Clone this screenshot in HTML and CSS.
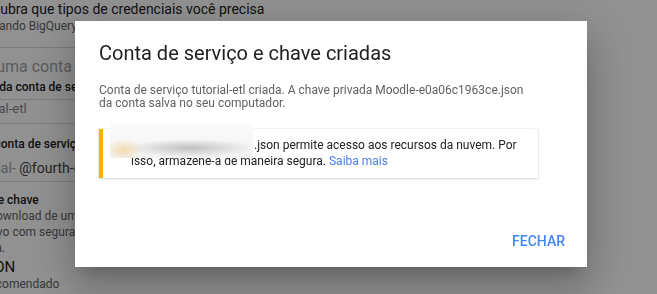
FILE: index.html
```html
<!DOCTYPE html>
<html lang="pt-BR">
<head>
    <meta charset="UTF-8">
    <meta name="viewport" content="width=device-width, initial-scale=1.0">
    <title>Criar chave da conta de serviço</title>
    <link rel="stylesheet" href="styles.css">
</head>
<body>
    <div class="page">
        <div class="intro">
            <h2 class="intro-title">Descubra que tipos de credenciais você precisa</h2>
            <p class="intro-sub">Usando BigQuery</p>
        </div>
        <p class="step-title">Crie uma conta de serviço</p>
        <p class="label lined">Nome da conta de serviço</p>
        <p class="value lined-2">tutorial-etl</p>
        <p class="label label-id">ID da conta de serviço</p>
        <p class="value-id lined-3"><span class="muted">tutorial-</span> @fourth-epoch-218014.iam.gserviceaccount.com</p>
        <p class="label label-key">Tipo de chave</p>
        <p class="desc">
            <span class="ln ln-1">Fazer download de um arquivo que contém a chave privada. Armazene o</span>
            <span class="ln ln-2">arquivo com segurança, porque essa chave não pode ser recuperada se for</span>
            <span class="ln ln-3">perdida.</span>
        </p>
        <p class="option">JSON</p>
        <p class="option-sub">Recomendado</p>
    </div>

    <div class="scrim"></div>

    <div class="dialog">
        <h1 class="dialog-title">Conta de serviço e chave criadas</h1>
        <p class="dialog-text">Conta de serviço tutorial-etl criada. A chave privada Moodle-e0a06c1963ce.json<br>da conta salva no seu computador.</p>
        <div class="notice">
            <div class="redact"></div>
            <p><span class="file">Moodle-e0a06c1963ce</span>.json permite acesso aos recursos da nuvem. Por isso, armazene-a de maneira segura. <a href="#">Saiba mais</a></p>
        </div>
        <div class="actions">
            <button>Fechar</button>
        </div>
    </div>
</body>
</html>
```

FILE: styles.css
```css
*{
    margin: 0;
    padding: 0;
    box-sizing: border-box;
}
body{
    font-family: Roboto, "Liberation Sans", sans-serif;
    background: #fff;
    color: #202124;
    overflow: hidden;
    width: 657px;
    height: 294px;
}

/* page behind the dialog */
.page{
    margin-left: -36px;
    width: 420px;
}
.intro{
    padding-bottom: 13px;
    border-bottom: 1px solid #dadce0;
}
.intro-title{
    padding-left: 5px;
    font-size: 14px;
    font-weight: 400;
    line-height: 18px;
    white-space: nowrap;
}
.intro-sub{
    padding-left: 21px;
    font-size: 12px;
    line-height: 16px;
    color: #5f6368;
}
.step-title{
    margin-top: 9px;
    font-size: 16px;
    line-height: 20px;
    color: #a0a4a8;
}
.label{
    font-size: 12px;
    font-weight: 500;
    line-height: 16px;
    color: #202124;
}
.lined{
    margin-top: 2px;
    padding-bottom: 4px;
    border-bottom: 1px solid #dadce0;
}
.value{
    margin-top: 1px;
    padding-left: 4px;
    padding-bottom: 6px;
    font-size: 13px;
    line-height: 16px;
    color: #80868b;
}
.lined-2{
    border-bottom: 1px solid #dadce0;
}
.label-id{
    margin-top: 12px;
}
.value-id{
    margin-top: 7px;
    padding-left: 4px;
    padding-bottom: 4px;
    font-size: 14px;
    line-height: 18px;
    color: #3c4043;
    white-space: nowrap;
}
.muted{
    color: #9aa0a6;
}
.lined-3{
    border-bottom: 1px solid #dadce0;
}
.label-key{
    margin-top: 10px;
}
.desc{
    font-size: 12px;
    line-height: 16px;
    color: #5f6368;
    white-space: nowrap;
}
.ln{
    display: block;
}
.ln-1{
    margin-left: -7px;
}
.ln-2{
    margin-left: 6px;
}
.ln-3{
    margin-left: -2px;
}
.option{
    margin-top: 2px;
    padding-left: 13px;
    font-size: 15px;
    line-height: 18px;
}
.option-sub{
    padding-left: 18px;
    font-size: 12px;
    line-height: 16px;
    color: #5f6368;
}

/* modal */
.scrim{
    position: fixed;
    inset: 0;
    background: rgba(0,0,0,.43);
}
.dialog{
    position: fixed;
    left: 75px;
    top: 21px;
    width: 512px;
    height: 246px;
    background: #fff;
    padding: 20px 24px 0;
    display: flex;
    flex-direction: column;
    box-shadow: 0 11px 15px -7px rgba(0,0,0,.2), 0 24px 38px 3px rgba(0,0,0,.14), 0 9px 46px 8px rgba(0,0,0,.12);
}
.dialog-title{
    font-size: 20px;
    font-weight: 400;
    line-height: 24px;
    color: #212121;
}
.dialog-text{
    margin-top: 19px;
    font-size: 12px;
    line-height: 13px;
    color: #616161;
}
.notice{
    position: relative;
    margin-top: 19px;
    width: 439px;
    padding: 8px 16px 9px 28px;
    border-left: 4px solid #f4b400;
    box-shadow: 0 1px 3px rgba(0,0,0,.14), 0 0 0 1px rgba(0,0,0,.03);
}
.notice p{
    font-size: 12px;
    line-height: 16px;
    color: #212121;
}
.notice a{
    color: #4a80e8;
    text-decoration: none;
}
.file{
    display: inline-block;
    width: 123px;
    overflow: hidden;
    vertical-align: top;
    white-space: nowrap;
    color: transparent;
}
.redact{
    position: absolute;
    left: 7px;
    top: -6px;
    width: 143px;
    height: 35px;
    background:
        radial-gradient(ellipse 18px 11px at 14px 27px, rgba(244,196,120,.55), transparent),
        radial-gradient(ellipse 64px 9px at 80px 25px, rgba(175,175,175,.75), transparent),
        linear-gradient(#fbfbfb, #f2f2f2);
}
.actions{
    margin-top: auto;
    margin-right: -10px;
    padding: 8px 0;
    display: flex;
    justify-content: flex-end;
}
.actions button{
    height: 36px;
    padding: 0 8px;
    border: 0;
    background: none;
    font-family: Roboto, "Liberation Sans", sans-serif;
    font-size: 14px;
    font-weight: 500;
    text-transform: uppercase;
    color: #4285f4;
    cursor: pointer;
}
```
